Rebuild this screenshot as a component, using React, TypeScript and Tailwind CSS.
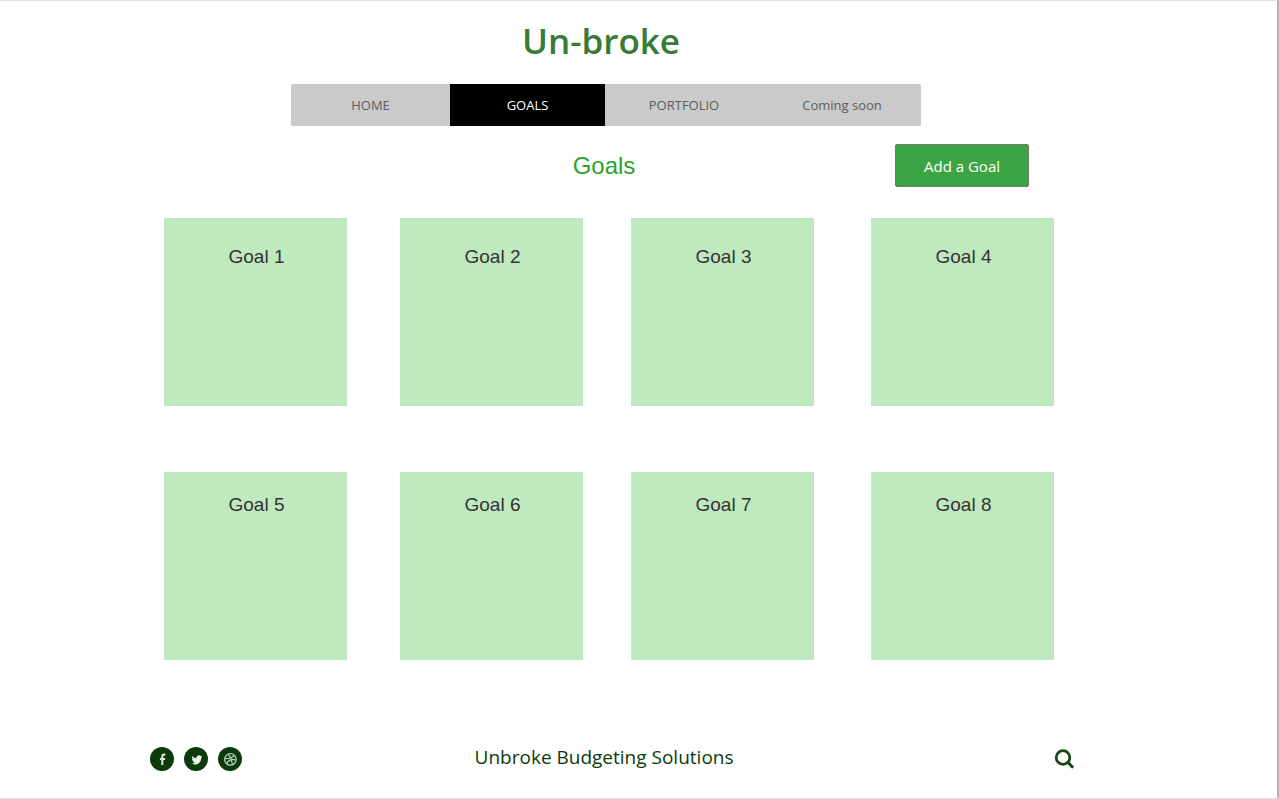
import React from "react";

const navItems = [
  { label: "HOME", active: false },
  { label: "GOALS", active: true },
  { label: "PORTFOLIO", active: false },
  { label: "Coming soon", active: false },
];

function Nav() {
  return (
    <nav
      aria-label="Main"
      className="mx-auto mt-5 grid h-[42px] w-full max-w-[630px] grid-cols-[159fr_155fr_158fr_158fr] overflow-hidden rounded-xs bg-[#cacaca] text-[13px] leading-5"
    >
      {navItems.map((item) => (
        <a
          key={item.label}
          href="#"
          aria-current={item.active ? "page" : undefined}
          className={
            item.active
              ? "flex items-center justify-center bg-black text-white"
              : "flex items-center justify-center text-[#5c5c5c]"
          }
        >
          {item.label}
        </a>
      ))}
    </nav>
  );
}

function GoalCard({ title, className }: { title: string; className: string }) {
  return (
    <article className={`h-[188px] w-[183px] bg-[#bfe9bf] text-center ${className}`}>
      <h3 className="font-['Liberation_Sans',Arial,sans-serif] text-[19px] leading-6 text-[#333333]">{title}</h3>
    </article>
  );
}

function GoalRow({ first, className }: { first: number; className: string }) {
  return (
    <div className="grid grid-cols-[236fr_231fr_240fr_183fr]">
      {[0, 1, 2, 3].map((i) => (
        <GoalCard key={i} title={`Goal ${first + i}`} className={className} />
      ))}
    </div>
  );
}

function SocialLink({ label, children }: { label: string; children: React.ReactNode }) {
  return (
    <a href="#" aria-label={label} className="block size-6">
      <svg viewBox="0 0 24 24" className="size-6" aria-hidden="true">
        <circle cx="12" cy="12" r="12" fill="#0b3b0b" />
        {children}
      </svg>
    </a>
  );
}

export default function App() {
  return (
    <div className="flex min-h-screen flex-col border-y border-r-2 border-y-[#e0e0e0] border-r-[#b4b4b4] bg-white pr-[203px] pl-[150px] font-['Open_Sans',sans-serif]">
      <header className="pr-3">
        <h1 className="pt-4 pr-[10px] text-center text-[35px] leading-[47px] font-semibold text-[#367c36]">
          Un-broke
        </h1>
        <Nav />
      </header>

      <main>
        <div className="mt-[18px] grid grid-cols-[1fr_auto_1fr] items-center pr-4">
          <h2 className="col-start-2 font-['Liberation_Sans',Arial,sans-serif] text-[24px] leading-8 text-[#28a428]">
            Goals
          </h2>
          <button
            type="button"
            className="mr-[29px] h-[43px] w-[134px] justify-self-end rounded-xs border border-[#6f7a6f] bg-[#3ca442] text-[15px] leading-5 text-white"
          >
            Add a Goal
          </button>
        </div>

        <div className="mt-[31px] flex flex-col gap-[66px] pr-5 pl-[14px]">
          <GoalRow first={1} className="pt-[27px] pl-[2px]" />
          <GoalRow first={5} className="pt-[21px] pl-[2px]" />
        </div>
      </main>

      <footer className="mt-auto grid grid-cols-[327fr_auto_343fr] items-start pb-[27px]">
        <div className="flex gap-[10px]">
          <SocialLink label="Facebook">
            <path
              fill="#dfeadf"
              d="M11.300 18v-5.100H9.900v-2h1.400V9.400c0-1.900 1-2.800 2.700-2.800.7 0 1.200.1 1.400.1v1.900h-1c-.8 0-1.100.4-1.100 1v1.300h2l-.3 2h-1.700V18z"
            />
          </SocialLink>
          <SocialLink label="Twitter">
            <path
              fill="#edf4ed"
              d="M18.200 9.400c-.4.2-.8.3-1.200.4.4-.3.8-.7.900-1.200-.4.300-.9.400-1.400.5a2.500 2.500 0 0 0-4.200 2.200c-1.700-.1-3.100-.900-4-2.200-.6 1-.3 2.300.7 3-.4 0-.7-.1-1-.3 0 1.100.7 2 1.700 2.300-.3.1-.6.1-1 0 .3.900 1.100 1.500 2.100 1.600-1 .7-2.100 1-3.300.9 1 .6 2.200 1 3.500 1 4.100 0 6.300-3.500 6.200-6.700.4-.3.800-.900 1-1.500z"
            />
          </SocialLink>
          <SocialLink label="Dribbble">
            <g fill="none" stroke="#b9ceb9" strokeWidth="1.300">
              <circle cx="12.400" cy="12.400" r="5.700" />
              <path d="M10.200 7.200c2 2.500 3.500 5.800 4.200 9.900M6.800 11.600c4 .1 7.400-.8 9.500-3.300M8.600 16.500c1.900-3.400 5-4.700 9.200-3.600" />
            </g>
          </SocialLink>
        </div>
        <p className="text-[19px] leading-5 text-[#0b3b0b]">Unbroke Budgeting Solutions</p>
        <button type="button" aria-label="Search" className="size-6 justify-self-end">
          <svg viewBox="0 0 24 24" className="size-6" fill="none" stroke="#164716" aria-hidden="true">
            <circle cx="13" cy="10.500" r="6.800" strokeWidth="2.800" />
            <path d="M18 15.500l4.200 4.300" strokeWidth="3" strokeLinecap="round" />
          </svg>
        </button>
      </footer>
    </div>
  );
}
